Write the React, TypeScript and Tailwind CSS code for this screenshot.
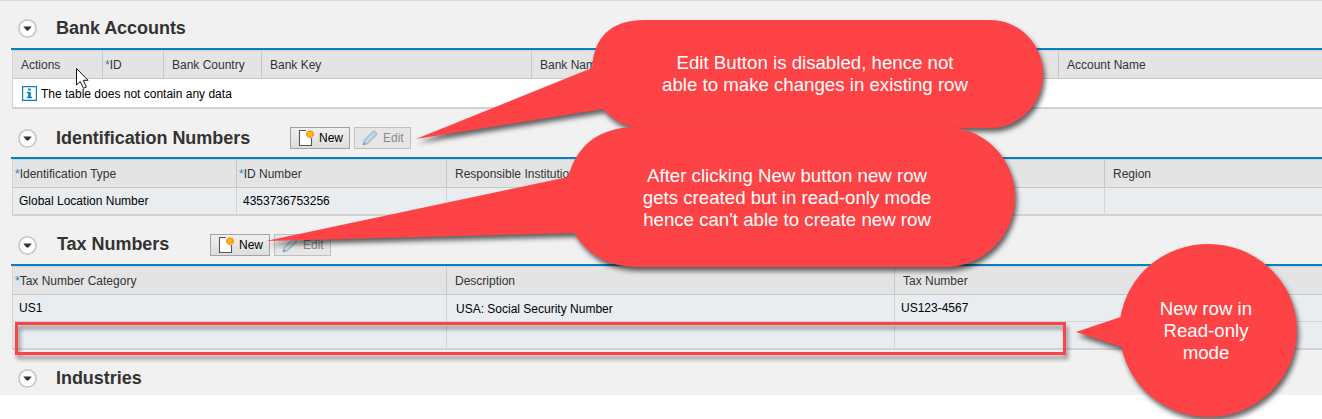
import type { ReactNode } from "react";

type Col = { label: string; width: string; required?: boolean };

function Toggle() {
  return (
    <svg width="20" height="20" viewBox="0 0 20 20" className="shrink-0">
      <circle cx="9.500" cy="10.500" r="8.600" fill="#fff" stroke="#cbcbcb" strokeWidth="1.8" />
      <path d="M5.300 8.500h8.400l-3.200 4h-2z" fill="#333" />
    </svg>
  );
}

function NewIcon() {
  return (
    <svg width="17" height="20" viewBox="0 0 17 20" className="shrink-0">
      <path d="M1.500 2.500h12v15h-12z" fill="#fff" />
      <path d="M8 2.500H1.500v15h12V10" fill="none" stroke="#555" strokeWidth="1.1" />
      <path
        d="M12 1.700l1 1.400 1.600-.5.1 1.700 1.600.4-.8 1.500.8 1.500-1.600.4-.1 1.700-1.600-.5-1 1.400-1-1.400-1.600.5-.1-1.700-1.600-.4.800-1.500-.8-1.500 1.600-.4.100-1.700 1.600.5z"
        fill="#f0920c"
      />
      <circle cx="12" cy="6.200" r="2.500" fill="#ffb81c" />
    </svg>
  );
}

function PencilIcon() {
  return (
    <svg width="16" height="16" viewBox="0 0 15 15" className="shrink-0">
      <path d="M1 14l1-4.500L10.300 1.400q1-.9 2.200.1l1 1q1 1 .1 2.100L5.500 12.800z" fill="#b4cddd" stroke="#9ab3c3" strokeWidth=".9" />
      <path d="M3.600 11.200l7.600-7.600" stroke="#cfe0ea" strokeWidth="1.300" />
      <path d="M1 14l.6-2.400 1.800 1.700z" fill="#8196a3" />
    </svg>
  );
}

function Buttons() {
  return (
    <div className="flex gap-1">
      <button className="flex h-[22px] w-[60px] items-center border border-[#a3a3a3] bg-gradient-to-b from-[#efefef] to-[#dedede] pl-[7px] text-[12px] text-black">
        <NewIcon />
        <span className="ml-[4px]">New</span>
      </button>
      <button className="flex h-[22px] w-[57px] items-center border border-[#c0c0c0] bg-[#e6e6e6] pl-[7px] text-[12px] text-[#8b8b8b]">
        <PencilIcon />
        <span className="ml-[5px]">Edit</span>
      </button>
    </div>
  );
}

function Heading({ title, width, children }: { title: string; width: string; children?: ReactNode }) {
  return (
    <div className="flex h-[22px] items-center pl-[18px]">
      <Toggle />
      <h2 className={`ml-[18px] shrink-0 whitespace-nowrap text-[18px] leading-[22px] font-bold tracking-[-0.04px] text-[#333] ${width}`}>
        {title}
      </h2>
      {children}
    </div>
  );
}

function TableHead({ cols }: { cols: Col[] }) {
  return (
    <div className="flex h-[28px] border-b border-[#c8c8c8] bg-[#e4e4e4] text-[#333]">
      {cols.map((c) => (
        <div
          key={c.label}
          className={`flex shrink-0 items-center whitespace-nowrap border-r border-[#c8c8c8] ${c.required ? "pl-[2px]" : "pl-[8px]"} ${c.width}`}
        >
          {c.required && <span className="text-[#1f83cc]">*</span>}
          {c.label}
        </div>
      ))}
    </div>
  );
}

function Row({ cells, cols, height }: { cells: string[]; cols: Col[]; height: string }) {
  return (
    <div className={`flex bg-[#e9edf0] text-black ${height}`}>
      {cols.map((c, i) => (
        <div
          key={c.label}
          className={`flex shrink-0 items-center whitespace-nowrap border-r border-[#d2d5d8] ${c.label === "Description" ? "pt-px pl-[9px]" : "pl-[6px]"} ${c.width}`}
        >
          {cells[i]}
        </div>
      ))}
    </div>
  );
}

function Table({ children }: { children: ReactNode }) {
  return (
    <div className="ml-[11px] overflow-hidden border-t-2 border-[#0a80c0]">
      <div className="ml-px border-t border-b-2 border-l border-[#d2d2d2]">{children}</div>
    </div>
  );
}

const bankCols: Col[] = [
  { label: "Actions", width: "w-[90px]" },
  { label: "ID", width: "w-[61px]", required: true },
  { label: "Bank Country", width: "w-[98px]" },
  { label: "Bank Key", width: "w-[270px]" },
  { label: "Bank Name", width: "w-[527px]" },
  { label: "Account Name", width: "w-[280px]" },
];

const idCols: Col[] = [
  { label: "Identification Type", width: "w-[224px]", required: true },
  { label: "ID Number", width: "w-[210px]", required: true },
  { label: "Responsible Institution", width: "w-[658px]" },
  { label: "Region", width: "w-[280px]" },
];

const taxCols: Col[] = [
  { label: "Tax Number Category", width: "w-[434px]", required: true },
  { label: "Description", width: "w-[448px]" },
  { label: "Tax Number", width: "w-[480px]" },
];

function CalloutText({ lines, place }: { lines: string[]; place: string }) {
  return (
    <div className={`absolute flex flex-col items-center whitespace-nowrap text-[18.67px] leading-[22px] text-white ${place}`}>
      {lines.map((l) => (
        <span key={l}>{l}</span>
      ))}
    </div>
  );
}

export default function App() {
  return (
    <div className="relative h-[419px] w-[1322px] overflow-hidden bg-white font-['Liberation_Sans',Arial,sans-serif] text-[12px] leading-[14px]">
      <div className="h-[395px] border-t border-[#d9d9d9] bg-[#f1f1f1]">
        <section className="pt-4">
          <Heading title="Bank Accounts" width="w-[200px]" />
          <div className="h-[9px]" />
          <Table>
            <TableHead cols={bankCols} />
            <div className="flex h-[28px] items-center gap-[4px] bg-white pl-[9px] text-black">
              <svg width="15" height="15" viewBox="0 0 15 15">
                <path d="M.6.6h13.800v13.800H.6z" fill="#fff" stroke="#0a80c0" strokeWidth="1.200" />
                <path d="M6.200 2.500h2.600v2H6.200zM4.800 5.800h4v5H10v1.500H4.800v-1.500h1.400V7.300H4.800z" fill="#0a80c0" />
              </svg>
              <span className="pt-[2px]">The table does not contain any data</span>
            </div>
          </Table>
        </section>
        <section className="pt-[18px]">
          <Heading title="Identification Numbers" width="w-[234px] pb-px">
            <Buttons />
          </Heading>
          <div className="h-[8px]" />
          <Table>
            <TableHead cols={idCols} />
            <Row cols={idCols} cells={["Global Location Number", "4353736753256"]} height="h-[26px]" />
          </Table>
        </section>
        <section className="pt-[18px]">
          <Heading title="Tax Numbers" width="w-[154px] pb-[2px] indent-px">
            <Buttons />
          </Heading>
          <div className="h-[8px]" />
          <Table>
            <TableHead cols={taxCols} />
            <Row cols={taxCols} cells={["US1", "USA: Social Security Number", "US123-4567"]} height="h-[26px]" />
            <div className="border-t border-[#d2d5d8]">
              <Row cols={taxCols} cells={[]} height="h-[26px]" />
            </div>
          </Table>
        </section>
        <section className="pt-[17px]">
          <Heading title="Industries" width="w-[200px]" />
        </section>
      </div>

      <svg className="absolute top-0 left-0" width="1322" height="419" viewBox="0 0 1322 419">
        <g fill="#fd4345" className="drop-shadow-[2px_4px_2.5px_rgba(0,0,0,0.6)]">
          <path d="M645 20H990A53 54 0 0 1 990 128H645Q619 128 603 109L416 139 592 68Q595 20 645 20Z" />
        </g>
        <g fill="#fd4345" className="drop-shadow-[2px_4px_2.5px_rgba(0,0,0,0.6)]">
          <path d="M1208.500 244A88.500 86.500 0 1 1 1121.500 347L1076 332 1120.500 317A88.500 86.500 0 0 1 1208.500 244Z" />
        </g>
        <path
          d="M16.500 323.500H1064.500V353.500H16.500Z"
          fill="none"
          stroke="#fd4345"
          strokeWidth="3"
          className="drop-shadow-[2px_4px_2px_rgba(0,0,0,0.45)]"
        />
        <g fill="#fd4345" className="drop-shadow-[2px_4px_2.5px_rgba(0,0,0,0.6)]">
          <path d="M637 127H945A70 70 0 0 1 945 267H637Q595 267 574 233L266 241 568 177Q582 127 637 127Z" />
        </g>
        <path
          d="M76.500 68.500V85L80.300 81.500 83.500 88.300 86.400 87 83.300 80.300H88Z"
          fill="#fff"
          stroke="#111"
          strokeWidth="1"
        />
      </svg>
      <CalloutText place="top-[52px] left-[615px] w-[400px]" lines={["Edit Button is disabled, hence not", "able to make changes in existing row"]} />
      <CalloutText
        place="top-[165px] left-[587px] w-[400px]"
        lines={["After clicking New button new row", "gets created but in read-only mode", "hence can't able to create new row"]}
      />
      <CalloutText place="top-[298px] left-[1106px] w-[200px]" lines={["New row in", "Read-only", "mode"]} />
    </div>
  );
}
